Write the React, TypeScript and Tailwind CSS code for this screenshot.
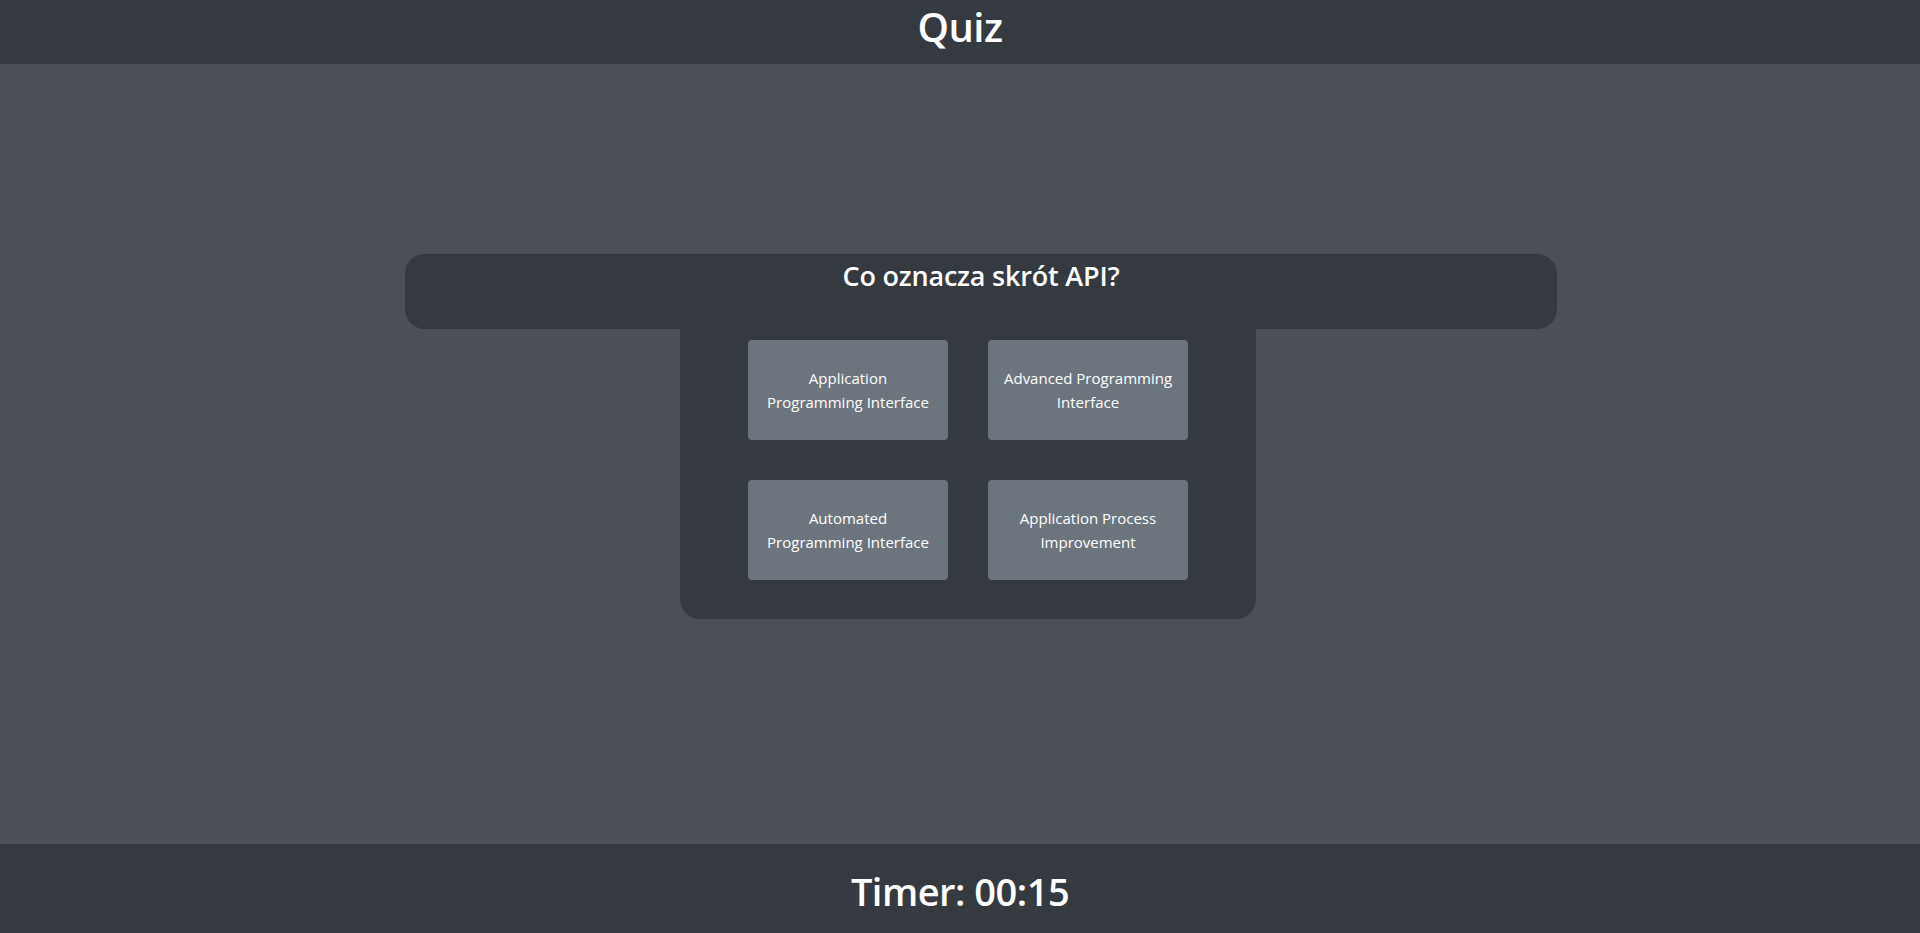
import React from "react";

const answers = [
  "Application Programming Interface",
  "Advanced Programming Interface",
  "Automated Programming Interface",
  "Application Process Improvement",
];

export default function App() {
  return (
    <div
      className="flex h-[933px] w-[1920px] flex-col overflow-hidden bg-[#4b5058] text-white"
      style={{ fontFamily: '"Open Sans", "Noto Sans", sans-serif' }}
    >
      <header className="flex h-[64px] shrink-0 items-start justify-center bg-[#343a40] pt-[3px]">
        <h1 className="text-[40px] font-semibold leading-[1.2] tracking-[-0.5px]">Quiz</h1>
      </header>
      <main className="flex flex-1 flex-col items-start pt-[190px]">
        <div className="ml-[405px] flex h-[75px] w-[1152px] justify-center rounded-[20px] bg-[#343a40] pt-[6px]">
          <h3 className="text-[27px] font-semibold leading-[1.2] tracking-[-0.2px]">Co oznacza skrót API?</h3>
        </div>
        <div className="ml-[680px] w-[576px] rounded-b-[20px] bg-[#343a40] px-[68px] pb-[39px] pt-[11px]">
          <div className="grid grid-cols-[200px_200px] gap-x-[40px] gap-y-[40px]">
            {answers.map((a) => (
              <button
                key={a}
                className="flex h-[100px] w-[200px] items-center justify-center rounded-[4px] bg-[#6c757d] px-[12px] text-center text-[15px] leading-[24px] text-white"
              >
                {a}
              </button>
            ))}
          </div>
        </div>
      </main>
      <footer className="flex h-[89px] shrink-0 items-center justify-center bg-[#343a40] pt-[6px]">
        <h1 className="text-[38px] font-semibold leading-[1.2] tracking-[-0.5px]">Timer: 00:15</h1>
      </footer>
    </div>
  );
}
